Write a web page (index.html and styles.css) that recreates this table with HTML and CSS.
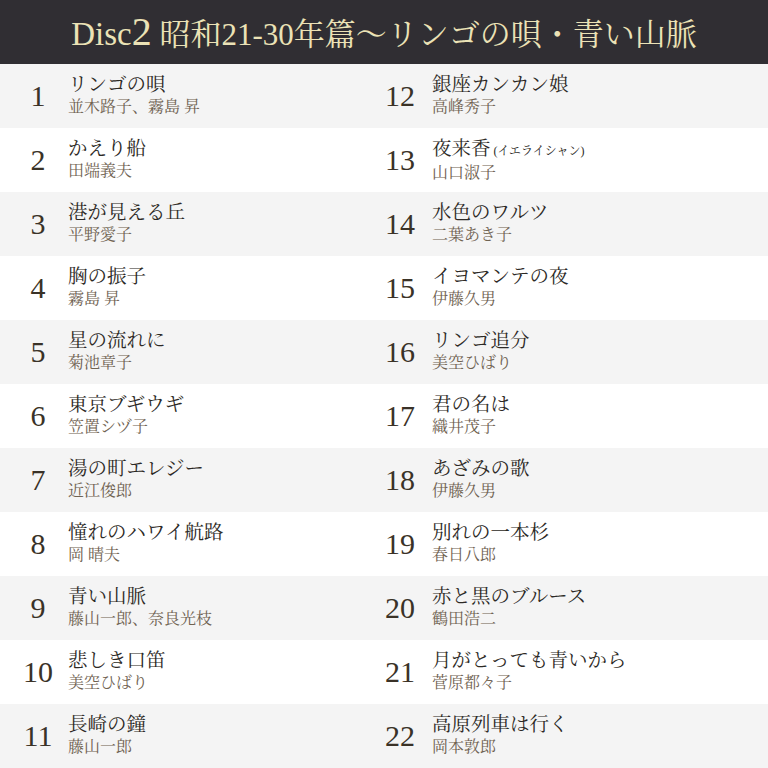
FILE: index.html
```html
<!DOCTYPE html>
<html lang="ja">
<head>
<meta charset="utf-8">
<title>Disc2</title>
<link rel="stylesheet" href="styles.css">
</head>
<body>
<div class="page">
  <header class="header">
    <h1 class="title"><span class="disc">Disc</span><span class="disc-num">2</span> 昭和21-30年篇〜リンゴの唄・青い山脈</h1>
  </header>
  <div class="list">
    <div class="row">
      <div class="item left"><span class="num">1</span><div class="text"><div class="song">リンゴの唄</div><div class="artist">並木路子、霧島 昇</div></div></div>
      <div class="item right"><span class="num">12</span><div class="text"><div class="song">銀座カンカン娘</div><div class="artist">高峰秀子</div></div></div>
    </div>
    <div class="row">
      <div class="item left"><span class="num">2</span><div class="text"><div class="song">かえり船</div><div class="artist">田端義夫</div></div></div>
      <div class="item right"><span class="num">13</span><div class="text"><div class="song">夜来香<span class="ruby"> (イエライシャン)</span></div><div class="artist">山口淑子</div></div></div>
    </div>
    <div class="row">
      <div class="item left"><span class="num">3</span><div class="text"><div class="song">港が見える丘</div><div class="artist">平野愛子</div></div></div>
      <div class="item right"><span class="num">14</span><div class="text"><div class="song">水色のワルツ</div><div class="artist">二葉あき子</div></div></div>
    </div>
    <div class="row">
      <div class="item left"><span class="num">4</span><div class="text"><div class="song">胸の振子</div><div class="artist">霧島 昇</div></div></div>
      <div class="item right"><span class="num">15</span><div class="text"><div class="song">イヨマンテの夜</div><div class="artist">伊藤久男</div></div></div>
    </div>
    <div class="row">
      <div class="item left"><span class="num">5</span><div class="text"><div class="song">星の流れに</div><div class="artist">菊池章子</div></div></div>
      <div class="item right"><span class="num">16</span><div class="text"><div class="song">リンゴ追分</div><div class="artist">美空ひばり</div></div></div>
    </div>
    <div class="row">
      <div class="item left"><span class="num">6</span><div class="text"><div class="song">東京ブギウギ</div><div class="artist">笠置シヅ子</div></div></div>
      <div class="item right"><span class="num">17</span><div class="text"><div class="song">君の名は</div><div class="artist">織井茂子</div></div></div>
    </div>
    <div class="row">
      <div class="item left"><span class="num">7</span><div class="text"><div class="song">湯の町エレジー</div><div class="artist">近江俊郎</div></div></div>
      <div class="item right"><span class="num">18</span><div class="text"><div class="song">あざみの歌</div><div class="artist">伊藤久男</div></div></div>
    </div>
    <div class="row">
      <div class="item left"><span class="num">8</span><div class="text"><div class="song">憧れのハワイ航路</div><div class="artist">岡 晴夫</div></div></div>
      <div class="item right"><span class="num">19</span><div class="text"><div class="song">別れの一本杉</div><div class="artist">春日八郎</div></div></div>
    </div>
    <div class="row">
      <div class="item left"><span class="num">9</span><div class="text"><div class="song">青い山脈</div><div class="artist">藤山一郎、奈良光枝</div></div></div>
      <div class="item right"><span class="num">20</span><div class="text"><div class="song">赤と黒のブルース</div><div class="artist">鶴田浩二</div></div></div>
    </div>
    <div class="row">
      <div class="item left"><span class="num">10</span><div class="text"><div class="song">悲しき口笛</div><div class="artist">美空ひばり</div></div></div>
      <div class="item right"><span class="num">21</span><div class="text"><div class="song">月がとっても青いから</div><div class="artist">菅原都々子</div></div></div>
    </div>
    <div class="row">
      <div class="item left"><span class="num">11</span><div class="text"><div class="song">長崎の鐘</div><div class="artist">藤山一郎</div></div></div>
      <div class="item right"><span class="num">22</span><div class="text"><div class="song">高原列車は行く</div><div class="artist">岡本敦郎</div></div></div>
    </div>
  </div>
</div>
</body>
</html>
```

FILE: styles.css
```css
* { box-sizing: border-box; }
html, body { margin: 0; padding: 0; }
body {
  width: 768px;
  height: 768px;
  overflow: hidden;
  background: #ffffff;
  font-family: "Liberation Serif", "Noto Serif CJK JP", "Noto Sans CJK JP", serif;
}
.page { width: 768px; }
.header {
  height: 64px;
  background: #302e33;
  display: flex;
  align-items: center;
  justify-content: center;
}
.title {
  margin: 0;
  padding-top: 2px;
  font-weight: normal;
  font-size: 31px;
  line-height: 40px;
  color: #ebe2b6;
  white-space: nowrap;
}
.disc { font-size: 33px; }
.disc-num { font-size: 40px; }
.list { display: flex; flex-direction: column; }
.row {
  display: grid;
  grid-template-columns: 384px 384px;
  height: 64px;
  background: #f4f4f4;
}
.row:nth-child(even) { background: #ffffff; }
.item {
  display: flex;
  align-items: flex-start;
}
.item.left { padding-left: 22px; gap: 14px; }
.item.right { padding-left: 0; gap: 16px; }
.num {
  width: 32px;
  text-align: center;
  font-size: 30px;
  line-height: 64px;
  color: #3a3227;
}
.text { padding-top: 12px; }
.song {
  font-size: 19.5px;
  line-height: 18px;
  color: #2c2925;
  white-space: nowrap;
}
.ruby { font-size: 12px; }
.artist {
  font-size: 16px;
  line-height: 14px;
  margin-top: 6px;
  color: #6f6251;
  white-space: nowrap;
}
```
